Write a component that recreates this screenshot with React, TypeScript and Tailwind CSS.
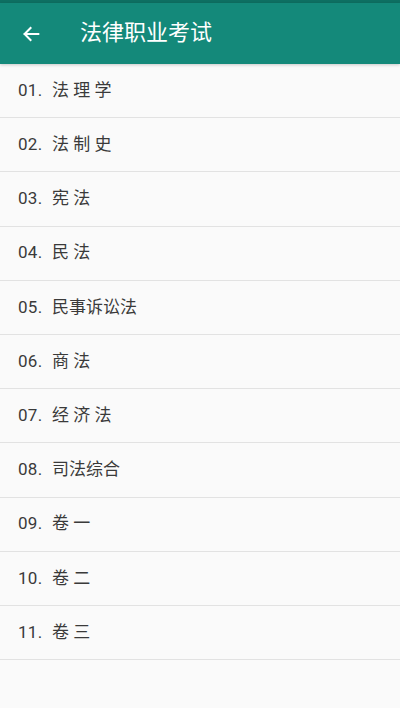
import React from "react";

const items: [string, string][] = [
  ["01.", "法 理 学"],
  ["02.", "法 制 史"],
  ["03.", "宪 法"],
  ["04.", "民 法"],
  ["05.", "民事诉讼法"],
  ["06.", "商 法"],
  ["07.", "经 济 法"],
  ["08.", "司法综合"],
  ["09.", "卷 一"],
  ["10.", "卷 二"],
  ["11.", "卷 三"],
];

export default function App() {
  return (
    <div
      className="w-[400px] h-[708px] bg-[#fafafa] overflow-hidden flex flex-col"
      style={{ fontFamily: 'Roboto, "Noto Sans CJK SC", sans-serif' }}
    >
      <div className="h-[3px] bg-[#0e6f62]" />
      <div className="h-[61px] bg-[#14897a] flex items-center shadow-[0_1px_3px_rgba(0,0,0,0.2)] z-10">
        <div className="w-[62px] flex justify-center">
          <svg width="22" height="22" viewBox="0 0 24 24" fill="none">
            <path
              d="M20 12H5M11.5 5.5L5 12l6.5 6.5"
              stroke="white"
              strokeWidth="2.2"
              strokeLinecap="square"
            />
          </svg>
        </div>
        <div className="pl-[18px] text-white text-[22px] leading-none pb-[2px]">法律职业考试</div>
      </div>
      <div className="flex flex-col">
        {items.map(([n, t]) => (
          <div
            key={n}
            className="h-[54.2px] border-b border-[#e2e2e2] flex items-center pl-[18px] text-[17px] text-[#3a3a3a]"
          >
            <span className="w-[34px] tracking-[0.3px]">{n}</span>
            <span className="whitespace-pre">{t}</span>
          </div>
        ))}
      </div>
    </div>
  );
}
